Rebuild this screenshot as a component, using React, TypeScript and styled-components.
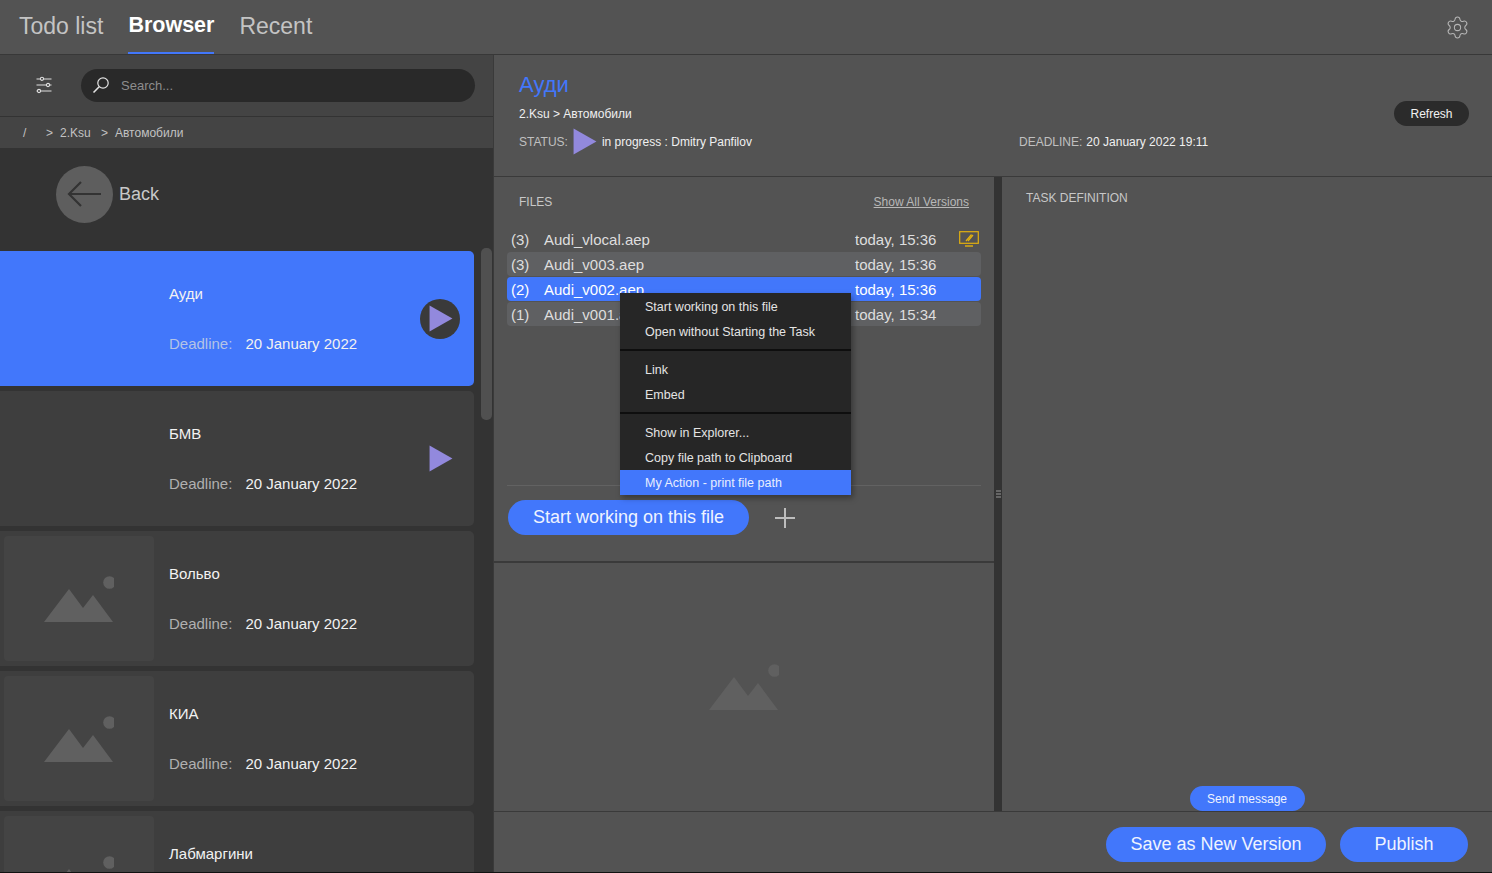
import styled, { createGlobalStyle } from 'styled-components'
import { Settings } from 'lucide-react'

const BLUE = '#4277fb'

const GlobalStyle = createGlobalStyle`
  html, body {
    margin: 0;
    padding: 0;
    background: #535353;
  }
  * {
    box-sizing: border-box;
  }
`

const projects = [
  { name: 'Ауди', state: 'active', thumb: false },
  { name: 'БМВ', state: 'play', thumb: false },
  { name: 'Вольво', state: 'none', thumb: true },
  { name: 'КИА', state: 'none', thumb: true },
  { name: 'Лабмаргини', state: 'none', thumb: true },
]

const files = [
  { count: '(3)', name: 'Audi_vlocal.aep', date: 'today, 15:36', kind: 'local' },
  { count: '(3)', name: 'Audi_v003.aep', date: 'today, 15:36', kind: 'plain' },
  { count: '(2)', name: 'Audi_v002.aep', date: 'today, 15:36', kind: 'selected' },
  { count: '(1)', name: 'Audi_v001.aep', date: 'today, 15:34', kind: 'plain' },
]

const Triangle = ({ size = 24 }: { size?: number }) => (
  <svg width={size} height={size * 1.12} viewBox="0 0 24 27">
    <path d="M0.5 0.5 L23.5 13.5 L0.5 26.5 Z" fill="#9289dd" />
  </svg>
)

const Mountains = () => (
  <svg width="70" height="46" viewBox="0 0 70 46">
    <path d="M0 46 L25 13 L39 32 L49 19 L69 46 Z" fill="#606060" />
    <circle cx="65.5" cy="6.5" r="6.3" fill="#606060" />
  </svg>
)

const App = () => {
  return (
    <Page>
      <GlobalStyle />
      <TopBar>
        <Tab>Todo list</Tab>
        <Tab $active>Browser</Tab>
        <Tab>Recent</Tab>
        <GearSlot>
          <Settings size={25} strokeWidth={1} color="#b5b5b5" />
        </GearSlot>
      </TopBar>

      <Main>
        <Sidebar>
          <Toolbar>
            <FilterSlot>
              <svg width="18" height="18" viewBox="0 0 18 18" fill="none" stroke="#e0e0e0" strokeWidth="1.1">
                <path d="M1.5 3 H16.5 M1.5 9 H16.5 M1.5 15 H16.5" />
                <circle cx="7" cy="2.8" r="1.6" fill="#444" />
                <circle cx="13" cy="9" r="1.6" fill="#444" />
                <circle cx="4" cy="15" r="1.6" fill="#444" />
              </svg>
            </FilterSlot>
            <SearchBox>
              <svg width="18" height="18" viewBox="0 0 18 18" fill="none" stroke="#e4e4e4" strokeWidth="1.2">
                <circle cx="11" cy="7" r="5.2" />
                <path d="M7.2 10.8 L1.5 16.5" strokeWidth="1.6" />
              </svg>
              <SearchText>Search...</SearchText>
            </SearchBox>
          </Toolbar>
          <Crumbs>
            <Crumb $w={23}>/</Crumb>
            <Crumb $w={14}>&gt;</Crumb>
            <Crumb $w={41}>2.Ksu</Crumb>
            <Crumb $w={14}>&gt;</Crumb>
            <Crumb>Автомобили</Crumb>
          </Crumbs>
          <ListArea>
            <List>
              <BackRow>
                <BackCircle>
                  <svg width="36" height="28" viewBox="0 0 36 28" fill="none" stroke="#333" strokeWidth="2.2">
                    <path d="M34 14 H2 M14 2 L2 14 L14 26" />
                  </svg>
                </BackCircle>
                <BackLabel>Back</BackLabel>
              </BackRow>
              {projects.map((p) => (
                <Card key={p.name} $active={p.state === 'active'}>
                  <Thumb $visible={p.thumb}>{p.thumb && <Mountains />}</Thumb>
                  <CardBody>
                    <CardTitle>{p.name}</CardTitle>
                    <CardMeta>
                      <MetaLabel $active={p.state === 'active'}>Deadline:</MetaLabel>
                      <span>20 January 2022</span>
                    </CardMeta>
                  </CardBody>
                  {p.state === 'active' && (
                    <PlayCircle>
                      <Triangle />
                    </PlayCircle>
                  )}
                  {p.state === 'play' && (
                    <PlaySlot>
                      <Triangle />
                    </PlaySlot>
                  )}
                </Card>
              ))}
            </List>
            <ScrollRail>
              <ScrollThumb />
            </ScrollRail>
          </ListArea>
        </Sidebar>

        <Content>
          <Header>
            <Title>Ауди</Title>
            <PathLine>2.Ksu &gt; Автомобили</PathLine>
            <RefreshButton>Refresh</RefreshButton>
            <StatusLine>
              <FieldLabel>STATUS:</FieldLabel>
              <Triangle />
              <span>in progress : Dmitry Panfilov</span>
            </StatusLine>
            <DeadlineLine>
              <FieldLabel>DEADLINE:</FieldLabel>
              <span>20 January 2022 19:11</span>
            </DeadlineLine>
          </Header>

          <Body>
            <FilesColumn>
              <FilesSection>
                <FilesHead>
                  <SectionLabel>FILES</SectionLabel>
                  <VersionsLink>Show All Versions</VersionsLink>
                </FilesHead>
                <FileList>
                  {files.map((f) => (
                    <FileRow key={f.name} $kind={f.kind}>
                      <span>{f.count}</span>
                      <span>{f.name}</span>
                      <span>{f.date}</span>
                      {f.kind === 'local' && (
                        <svg width="20" height="16" viewBox="0 0 20 16" fill="none" stroke="#e2b00f">
                          <rect x="0.7" y="0.7" width="18.6" height="11.6" strokeWidth="1.2" />
                          <path d="M6 15 H14" strokeWidth="1.4" />
                          <path d="M7 10 L12.5 3.5 M9 10 L14 4" strokeWidth="1.2" />
                        </svg>
                      )}
                    </FileRow>
                  ))}
                </FileList>
                <Actions>
                  <BlueButton $w={241}>Start working on this file</BlueButton>
                  <PlusSlot>
                    <svg width="22" height="22" viewBox="0 0 22 22" stroke="#bdbdbd" strokeWidth="2">
                      <path d="M11 1 V21 M1 11 H21" />
                    </svg>
                  </PlusSlot>
                </Actions>
                <ContextMenu>
                  <MenuGroup>
                    <MenuItem>Start working on this file</MenuItem>
                    <MenuItem>Open without Starting the Task</MenuItem>
                  </MenuGroup>
                  <MenuGroup>
                    <MenuItem>Link</MenuItem>
                    <MenuItem>Embed</MenuItem>
                  </MenuGroup>
                  <MenuGroup>
                    <MenuItem>Show in Explorer...</MenuItem>
                    <MenuItem>Copy file path to Clipboard</MenuItem>
                    <MenuItem $active>My Action - print file path</MenuItem>
                  </MenuGroup>
                </ContextMenu>
              </FilesSection>
              <Preview>
                <Mountains />
              </Preview>
            </FilesColumn>
            <Splitter>
              <Grip />
              <Grip />
              <Grip />
            </Splitter>
            <TaskColumn>
              <TaskLabel>TASK DEFINITION</TaskLabel>
              <SendButton>Send message</SendButton>
            </TaskColumn>
          </Body>

          <Footer>
            <BlueButton $w={220}>Save as New Version</BlueButton>
            <BlueButton $w={128}>Publish</BlueButton>
          </Footer>
        </Content>
      </Main>
    </Page>
  )
}

const Page = styled.div`
  width: 1492px;
  height: 873px;
  display: flex;
  flex-direction: column;
  overflow: hidden;
  background: #535353;
  color: #e6e6e6;
  font-family: 'Liberation Sans', Arial, sans-serif;
  border-bottom: 1px solid #111;
`

const TopBar = styled.div`
  height: 55px;
  flex: none;
  display: flex;
  gap: 25px;
  padding-left: 19px;
  border-bottom: 1px solid #383838;
`

const Tab = styled.div<{ $active?: boolean }>`
  height: 54px;
  padding-top: ${(p) => (p.$active ? '12px' : '13px')};
  font-size: ${(p) => (p.$active ? '21.5px' : '23px')};
  line-height: 26px;
  font-weight: ${(p) => (p.$active ? 700 : 400)};
  color: ${(p) => (p.$active ? '#ffffff' : '#c4c4c4')};
  border-bottom: 2px solid ${(p) => (p.$active ? BLUE : 'transparent')};
`

const GearSlot = styled.div`
  margin-left: auto;
  width: 70px;
  display: flex;
  align-items: center;
  justify-content: center;
`

const Main = styled.div`
  flex: 1;
  min-height: 0;
  display: flex;
`

const Sidebar = styled.div`
  width: 494px;
  flex: none;
  display: flex;
  flex-direction: column;
  border-right: 1px solid #3a3a3a;
`

const Toolbar = styled.div`
  height: 62px;
  flex: none;
  display: flex;
  align-items: center;
  padding: 0 18px 1px 0;
  background: #444444;
  border-bottom: 1px solid #333;
`

const FilterSlot = styled.div`
  width: 81px;
  padding-left: 7px;
  display: flex;
  align-items: center;
  justify-content: center;
`

const SearchBox = styled.div`
  flex: 1;
  height: 33px;
  display: flex;
  align-items: center;
  gap: 11px;
  padding-left: 11px;
  border-radius: 17px;
  background: #292929;
`

const SearchText = styled.span`
  font-size: 13px;
  color: #8d8d8d;
`

const Crumbs = styled.div`
  height: 31px;
  flex: none;
  display: flex;
  align-items: center;
  padding-left: 23px;
  font-size: 12px;
  color: #c2c2c2;
  background: #444444;
`

const Crumb = styled.span<{ $w?: number }>`
  flex: none;
  width: ${(p) => (p.$w ? `${p.$w}px` : 'auto')};
`

const ListArea = styled.div`
  flex: 1;
  min-height: 0;
  display: flex;
  background: #333333;
`

const List = styled.div`
  width: 474px;
  flex: none;
  display: flex;
  flex-direction: column;
  gap: 5px;
`

const BackRow = styled.div`
  height: 98px;
  flex: none;
  display: flex;
  align-items: center;
  gap: 6px;
  padding: 0 0 6px 56px;
`

const BackCircle = styled.div`
  width: 57px;
  height: 57px;
  display: flex;
  align-items: center;
  justify-content: center;
  border-radius: 50%;
  background: #5e5e5e;
`

const BackLabel = styled.span`
  font-size: 18px;
  color: #c8c8c8;
`

const Card = styled.div<{ $active?: boolean }>`
  height: 135px;
  flex: none;
  display: flex;
  align-items: center;
  padding: 0 14px 0 4px;
  border-radius: 0 5px 5px 0;
  background: ${(p) => (p.$active ? BLUE : '#3e3e3e')};
  color: #f2f2f2;
`

const Thumb = styled.div<{ $visible?: boolean }>`
  width: 150px;
  height: 125px;
  flex: none;
  display: flex;
  align-items: center;
  justify-content: center;
  border-radius: 4px;
  background: ${(p) => (p.$visible ? '#444444' : 'transparent')};
`

const CardBody = styled.div`
  flex: 1;
  padding-left: 15px;
  display: flex;
  flex-direction: column;
  gap: 32px;
`

const CardTitle = styled.div`
  font-size: 15px;
  line-height: 18px;
`

const CardMeta = styled.div`
  display: flex;
  gap: 13px;
  font-size: 15px;
  line-height: 18px;
`

const MetaLabel = styled.span<{ $active?: boolean }>`
  color: ${(p) => (p.$active ? '#b4c3e6' : '#b0b0b0')};
`

const PlayCircle = styled.div`
  width: 40px;
  height: 40px;
  flex: none;
  display: flex;
  align-items: center;
  justify-content: center;
  padding-left: 2px;
  border-radius: 50%;
  background: #3a3a3a;
`

const PlaySlot = styled.div`
  width: 40px;
  flex: none;
  display: flex;
  justify-content: center;
  padding-left: 2px;
`

const ScrollRail = styled.div`
  flex: 1;
  padding: 0 1px 0 7px;
`

const ScrollThumb = styled.div`
  margin-top: 100px;
  height: 172px;
  border-radius: 5px;
  background: #505050;
`

const Content = styled.div`
  flex: 1;
  min-width: 0;
  display: flex;
  flex-direction: column;
`

const Header = styled.div`
  height: 122px;
  flex: none;
  display: grid;
  grid-template-columns: 500px 1fr auto;
  grid-template-rows: 30px 27px 29px;
  align-items: center;
  padding: 15px 23px 0 25px;
  border-bottom: 1px solid #3a3a3a;
`

const Title = styled.div`
  grid-column: 1 / -1;
  font-size: 22px;
  color: ${BLUE};
`

const PathLine = styled.div`
  grid-column: 1 / 3;
  font-size: 12px;
  color: #f0f0f0;
`

const RefreshButton = styled.div`
  height: 25px;
  width: 75px;
  display: flex;
  align-items: center;
  justify-content: center;
  font-size: 12px;
  color: #f2f2f2;
  border-radius: 13px;
  background: #2b2b2b;
`

const StatusLine = styled.div`
  display: flex;
  align-items: center;
  gap: 5px;
  font-size: 12px;
  color: #f0f0f0;
`

const DeadlineLine = styled.div`
  grid-column: 2 / 4;
  display: flex;
  gap: 4px;
  font-size: 12px;
  color: #f0f0f0;
`

const FieldLabel = styled.span`
  color: #c0c0c0;
`

const Body = styled.div`
  flex: 1;
  min-height: 0;
  display: flex;
`

const FilesColumn = styled.div`
  width: 500px;
  flex: none;
  display: flex;
  flex-direction: column;
`

const FilesSection = styled.div`
  position: relative;
  height: 386px;
  flex: none;
  display: flex;
  flex-direction: column;
  padding: 15px 13px 0;
  border-bottom: 2px solid #3a3a3a;
`

const FilesHead = styled.div`
  height: 20px;
  flex: none;
  display: flex;
  align-items: center;
  justify-content: space-between;
  padding: 0 12px;
  margin-bottom: 15px;
`

const SectionLabel = styled.span`
  font-size: 12px;
  color: #c8c8c8;
`

const VersionsLink = styled.span`
  font-size: 12px;
  color: #b8b8b8;
  text-decoration: underline;
`

const FileList = styled.div`
  flex: 1;
  display: flex;
  flex-direction: column;
  gap: 1px;
`

const FileRow = styled.div<{ $kind: string }>`
  height: 24px;
  flex: none;
  display: grid;
  grid-template-columns: 33px 311px 104px auto;
  align-items: center;
  padding-left: 4px;
  font-size: 15px;
  border-radius: 4px;
  color: ${(p) => (p.$kind === 'selected' ? '#ffffff' : '#dedede')};
  background: ${(p) =>
    p.$kind === 'selected' ? BLUE : p.$kind === 'plain' ? '#5f6062' : 'transparent'};
`

const Actions = styled.div`
  height: 76px;
  flex: none;
  display: flex;
  align-items: flex-start;
  gap: 25px;
  padding: 14px 0 0 1px;
  border-top: 1px solid #626262;
`

const BlueButton = styled.div<{ $w: number }>`
  width: ${(p) => p.$w}px;
  height: 35px;
  flex: none;
  display: flex;
  align-items: center;
  justify-content: center;
  font-size: 18px;
  color: #eef3ff;
  border-radius: 18px;
  background: ${BLUE};
`

const PlusSlot = styled.div`
  height: 35px;
  display: flex;
  align-items: center;
`

const ContextMenu = styled.div`
  position: absolute;
  left: 126px;
  top: 116px;
  width: 231px;
  background: #262626;
  box-shadow: 2px 3px 6px rgba(0, 0, 0, 0.35);
`

const MenuGroup = styled.div`
  padding-top: 1px;
  padding-bottom: 5px;
  border-bottom: 2px solid #0e0e0e;
  & + & {
    padding-top: 6px;
  }
  &:last-child {
    border-bottom: 0;
    padding-bottom: 0;
  }
`

const MenuItem = styled.div<{ $active?: boolean }>`
  height: 25px;
  display: flex;
  align-items: center;
  padding-left: 25px;
  font-size: 12.5px;
  color: ${(p) => (p.$active ? '#e8eeff' : '#e4e4e4')};
  background: ${(p) => (p.$active ? BLUE : 'transparent')};
`

const Preview = styled.div`
  flex: 1;
  display: flex;
  align-items: center;
  justify-content: center;
`

const Splitter = styled.div`
  width: 8px;
  flex: none;
  display: flex;
  flex-direction: column;
  align-items: center;
  justify-content: center;
  gap: 1px;
  background: #333333;
`

const Grip = styled.div`
  width: 5px;
  height: 2px;
  background: #666666;
`

const TaskColumn = styled.div`
  flex: 1;
  display: flex;
  flex-direction: column;
  align-items: center;
  justify-content: space-between;
`

const TaskLabel = styled.div`
  align-self: flex-start;
  padding: 14px 0 0 24px;
  font-size: 12px;
  color: #c8c8c8;
`

const SendButton = styled.div`
  width: 115px;
  height: 25px;
  display: flex;
  align-items: center;
  justify-content: center;
  font-size: 12px;
  color: #eef3ff;
  border-radius: 13px;
  background: ${BLUE};
`

const Footer = styled.div`
  height: 61px;
  flex: none;
  display: flex;
  align-items: flex-start;
  justify-content: flex-end;
  gap: 14px;
  padding: 15px 24px 0 0;
  border-top: 1px solid #3a3a3a;
`

export default App
